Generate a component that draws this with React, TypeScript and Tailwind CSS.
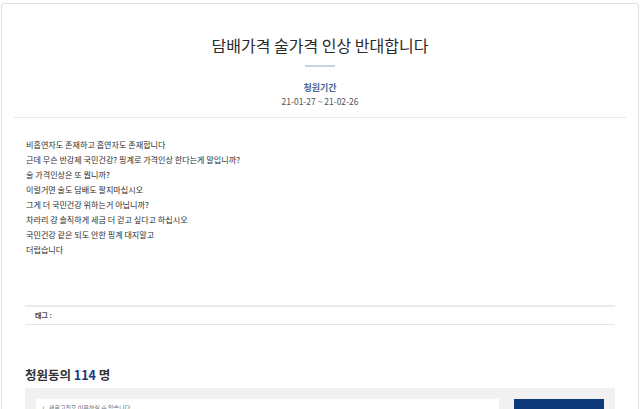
const lines = [
  '비흡연자도 존재하고 흡연자도 존재합니다',
  '근데 무슨 반강제 국민건강? 핑계로 가격인상 한다는게 말입니까?',
  '술 가격인상은 또 뭡니까?',
  '이럴거면 술도 담배도 팔지마십시오',
  '그게 더 국민건강 위하는거 아닙니까?',
  '차라리 걍 솔직하게 세금 더 걷고 싶다고 하십시오',
  '국민건강 같은 되도 안한 핑계 대지말고',
  '더럽습니다',
];

export default function App() {
  return (
    <div
      className="h-[409px] overflow-hidden bg-white px-px pt-[3px]"
      style={{ fontFamily: '"Noto Sans CJK KR", "Noto Sans", sans-serif' }}
    >
      <div className="h-[420px] rounded-t-[3px] border border-[#dedede] bg-white">
        <div className="pt-[31px] text-center">
          <h1 className="text-[16px] leading-[20px] font-normal text-[#2a2a2a]">담배가격 술가격 인상 반대합니다</h1>
          <div className="mx-auto mt-[10px] h-[2px] w-[30px] bg-[#c9d3e0]" />
          <div className="mt-[15px] text-[9px] leading-[12px] font-bold text-[#4a6898]">청원기간</div>
          <div className="mt-px text-[8.5px] leading-[12px] text-[#555]">21-01-27 ~ 21-02-26</div>
        </div>
        <div className="mx-[13px] mt-[10px] border-t border-dotted border-[#d5d5d5]" />

        <div className="mt-[19px] pl-[24px] text-[8.1px] leading-[15px] text-[#2e2e2e]">
          {lines.map((l, i) => (
            <div key={i}>{l}</div>
          ))}
        </div>

        <div className="mx-[23px] mt-[48px]">
          <div className="h-[2px] bg-[#ebebeb]" />
          <div className="flex h-[18px] items-center border-b border-[#e3e3e3] pl-[10px] text-[7px] font-bold text-[#444]">
            태그 :
          </div>
        </div>

        <div className="mx-[23px] mt-[41px]">
          <h2 className="text-[12.5px] leading-[18px] font-bold text-[#333]">
            청원동의 <span className="text-[#14397f]">114</span> 명
          </h2>
          <div className="mt-[4px] flex gap-[15px] bg-[#f1f1f1] px-[11px] pt-[11px] pb-[11px]">
            <div className="h-[30px] flex-1 bg-white px-[6px] pt-[4px] text-[6px] text-[#666]">
              ㄴ 새로고침후 이용하실 수 있습니다
            </div>
            <div className="h-[30px] w-[90px] bg-[#0d397b]" />
          </div>
        </div>
      </div>
    </div>
  );
}
